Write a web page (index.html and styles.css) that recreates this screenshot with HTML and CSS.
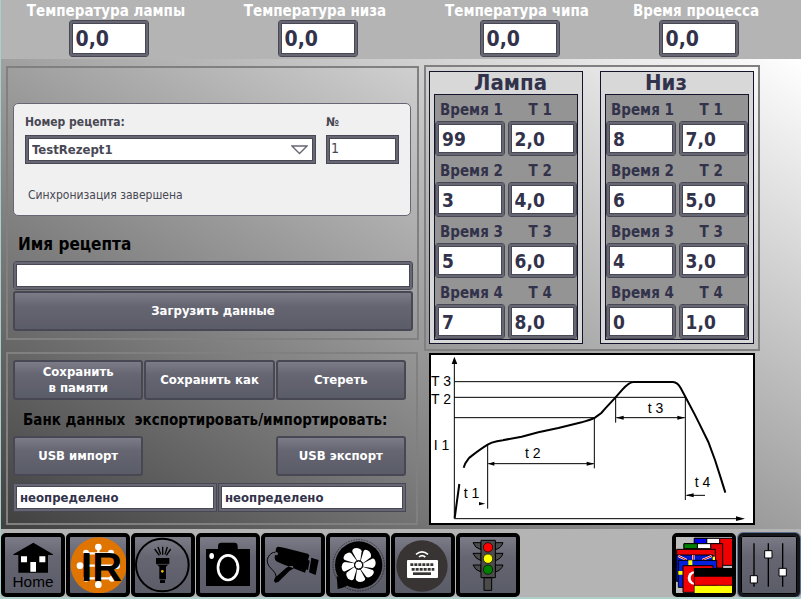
FILE: index.html
```
<!DOCTYPE html>
<html lang="ru">
<head>
<meta charset="utf-8">
<title>Рецепты</title>
<link rel="stylesheet" href="styles.css">
</head>
<body>
<header class="readings">
  <div class="reading"><label for="lamp">Температура лампы</label><input class="field" id="lamp" value="0,0"></div>
  <div class="reading"><label for="bottom">Температура низа</label><input class="field" id="bottom" value="0,0"></div>
  <div class="reading"><label for="chip">Температура чипа</label><input class="field" id="chip" value="0,0"></div>
  <div class="reading"><label for="process">Время процесса</label><input class="field" id="process" value="0,0"></div>
</header>
<main class="work">
  <div class="column">
    <section class="panel recipe">
      <div class="card">
        <div class="pick">
          <label for="recipe">Номер рецепта:</label>
          <div class="select-wrap">
            <select class="field square" id="recipe"><option>TestRezept1</option></select>
            <svg class="arrow" viewBox="0 0 17 10" aria-hidden="true"><path d="M1 1H16L8.500 8.500Z" fill="#fff" stroke="#676774" stroke-width="1.300"/></svg>
          </div>
        </div>
        <div class="pick">
          <label for="number">№</label>
          <input class="field square number" id="number" value="1">
        </div>
        <p class="status">Синхронизация завершена</p>
      </div>
      <label class="name-label" for="name">Имя рецепта</label>
      <input class="field name" id="name">
      <button class="action" type="button">Загрузить данные</button>
    </section>
    <section class="panel storage">
      <div class="row three">
        <button class="action" type="button">Сохранить<br>в памяти</button>
        <button class="action" type="button">Сохранить как</button>
        <button class="action" type="button">Стереть</button>
      </div>
      <h2 class="bank">Банк данных&nbsp; экспортировать/импортировать:</h2>
      <div class="row three">
        <button class="action" type="button">USB импорт</button>
        <button class="action last" type="button">USB экспорт</button>
      </div>
      <div class="row states">
        <input class="field square" aria-label="Состояние импорта" value="неопределено">
        <input class="field square" aria-label="Состояние экспорта" value="неопределено">
      </div>
    </section>
  </div>
  <div class="column">
    <section class="panel profiles">
      <div class="profile">
        <h2>Лампа</h2>
        <div class="steps">
          <div class="step"><label for="a1">Время 1</label><input class="field" id="a1" value="99"></div>
          <div class="step temp"><label for="b1">T 1</label><input class="field" id="b1" value="2,0"></div>
          <div class="step"><label for="a2">Время 2</label><input class="field" id="a2" value="3"></div>
          <div class="step temp"><label for="b2">T 2</label><input class="field" id="b2" value="4,0"></div>
          <div class="step"><label for="a3">Время 3</label><input class="field" id="a3" value="5"></div>
          <div class="step temp"><label for="b3">T 3</label><input class="field" id="b3" value="6,0"></div>
          <div class="step"><label for="a4">Время 4</label><input class="field" id="a4" value="7"></div>
          <div class="step temp"><label for="b4">T 4</label><input class="field" id="b4" value="8,0"></div>
        </div>
      </div>
      <div class="profile">
        <h2>Низ</h2>
        <div class="steps">
          <div class="step"><label for="c1">Время 1</label><input class="field" id="c1" value="8"></div>
          <div class="step temp"><label for="d1">T 1</label><input class="field" id="d1" value="7,0"></div>
          <div class="step"><label for="c2">Время 2</label><input class="field" id="c2" value="6"></div>
          <div class="step temp"><label for="d2">T 2</label><input class="field" id="d2" value="5,0"></div>
          <div class="step"><label for="c3">Время 3</label><input class="field" id="c3" value="4"></div>
          <div class="step temp"><label for="d3">T 3</label><input class="field" id="d3" value="3,0"></div>
          <div class="step"><label for="c4">Время 4</label><input class="field" id="c4" value="0"></div>
          <div class="step temp"><label for="d4">T 4</label><input class="field" id="d4" value="1,0"></div>
        </div>
      </div>
    </section>
    <svg class="chart" viewBox="18 15 966 504" role="img">
      <g fill="none" stroke="#000" stroke-width="3">
        <path d="M88 30V506H950M88 95H622M88 142H781M88 203H508M188 284V476M508 203V355M572 142V218M781 142V450M190 341H506M574 203H779M785 436H840"/>
        <path stroke-width="6" d="M89 504L103 402M116 353C120 338 126 332 134 322C150 310 168 296 188 284C196 279 205 276 216 274L290 260L340 247L400 234L470 217C490 211 502 208 510 203L529 189L541 175L571 143L592 119C602 108 612 97 624 96H744C756 97 762 105 767 114L783 144L809 193L824 223L850 276L870 330L886 380L901 428"/>
      </g>
      <path d="M88 20L80 42H97ZM960 506L933 499V513ZM189 341L208 335V347ZM508 341L485 335V347ZM573 203L596 197V209ZM780 203L757 197V209ZM782 436L806 430V442ZM181 461L162 456V466Z"/>
      <g class="marks">
        <text x="18" y="107">T 3</text>
        <text x="18" y="161">T 2</text>
        <text x="26" y="300">I 1</text>
        <text x="116" y="444">t 1</text><text x="300" y="323">t 2</text>
        <text x="668" y="189">t 3</text><text x="809" y="410">t 4</text>
      </g>
    </svg>
  </div>
</main>
<nav class="toolbar">
  <button class="tool" type="button" aria-label="Home"><svg viewBox="15 27 168 168">
    <path d="M40 79L100 44L159 79V81H144V134H55V81H40Z"/><path fill="#fff" d="M63 85H81V103H63ZM118 85H136V103H118ZM91 102H108V131H91Z"/>
    <text x="99" y="176" class="home">Home</text></svg></button>
  <button class="tool" type="button" aria-label="IR"><svg viewBox="210 27 168 168">
    <circle cx="296" cy="112" r="84" fill="#df7500"/>
    <g fill="#fff"><circle cx="295" cy="57" r="10"/><circle cx="258" cy="74" r="9"/><circle cx="333" cy="74" r="9"/><circle cx="240" cy="113" r="10"/><circle cx="350" cy="113" r="10"/><circle cx="258" cy="152" r="9"/><circle cx="336" cy="152" r="9"/><circle cx="295" cy="170" r="10"/></g>
    <path d="M295 58V170M260 76H330M242 113H350M260 151H334" stroke="#fff" stroke-width="7"/>
    <text x="304" y="158" class="ir">IR</text></svg></button>
  <button class="tool" type="button" aria-label="Фонарь"><svg viewBox="405 27 168 168">
    <circle cx="487" cy="111" r="79" fill="none" stroke="#000" stroke-width="6"/>
    <path d="M464 63L478 82M474 57L482 79M488 56V80M502 57L495 79M512 63L499 82" stroke="#000" stroke-width="4"/>
    <path d="M468 90H508V107L498 116V154H495V165H480V154H478V116L468 107Z"/><path d="M469 109H507M479 155H496" stroke="#666673" stroke-width="2"/>
    <circle cx="487" cy="130" r="4" fill="#eebd00"/></svg></button>
  <button class="tool" type="button" aria-label="Камера"><svg viewBox="15 27 168 168">
    <path d="M33 63H69V54Q69 44 79 44H118Q128 44 128 54V63H165V174H33Z"/>
    <ellipse cx="99" cy="119" rx="30" ry="37" fill="none" stroke="#fff" stroke-width="8"/><ellipse cx="50" cy="84" rx="7" ry="9" fill="#fff"/></svg></button>
  <button class="tool" type="button" aria-label="Наблюдение"><svg viewBox="210 27 168 168">
    <path d="M250 56Q245 55 243 62L239 88Q239 98 247 101L262 108L330 134L334 124L339 127L344 98L339 96L343 82L338 77L267 59ZM349 89L371 96L362 141L342 133ZM273 120L284 114H294L295 122L284 128L250 162L240 164L237 157L240 149Z"/>
    <circle cx="244" cy="77" r="5" fill="#656570"/>
    <path d="M240 73C229 72 216 86 217 100C218 117 235 125 241 137Q248 149 239 160" fill="none" stroke="#000" stroke-width="3"/></svg></button>
  <button class="tool" type="button" aria-label="Вентилятор"><svg viewBox="405 27 168 168">
    <circle cx="491" cy="111" r="71"/><circle cx="491" cy="112" r="77" fill="none" stroke="#000" stroke-width="3" stroke-dasharray="5 3" opacity=".5"/><path d="M425 143L428 183Q449 179 459 170Z"/>
    <g fill="#fff">
      <path d="M486 97L472 71Q470 61 486 60Q499 62 500 70L496 97Z"/>
      <path transform="rotate(45 491 111)" d="M486 97L472 71Q470 61 486 60Q499 62 500 70L496 97Z"/>
      <path transform="rotate(90 491 111)" d="M486 97L472 71Q470 61 486 60Q499 62 500 70L496 97Z"/>
      <path transform="rotate(135 491 111)" d="M486 97L472 71Q470 61 486 60Q499 62 500 70L496 97Z"/>
      <path transform="rotate(180 491 111)" d="M486 97L472 71Q470 61 486 60Q499 62 500 70L496 97Z"/>
      <path transform="rotate(225 491 111)" d="M486 97L472 71Q470 61 486 60Q499 62 500 70L496 97Z"/>
      <path transform="rotate(270 491 111)" d="M486 97L472 71Q470 61 486 60Q499 62 500 70L496 97Z"/>
      <path transform="rotate(315 491 111)" d="M486 97L472 71Q470 61 486 60Q499 62 500 70L496 97Z"/>
    </g><circle cx="491" cy="111" r="12" fill="#fff" stroke="#000" stroke-width="3"/></svg></button>
  <button class="tool" type="button" aria-label="Клавиатура"><svg viewBox="30 27 168 168">
    <circle cx="111" cy="114" r="77" fill="#393434"/><rect x="66" y="96" width="93" height="54" rx="3" fill="#fff"/>
    <path d="M76 110H148M80 124H148" stroke="#393434" stroke-width="8" stroke-dasharray="9 3"/><path d="M84 137H138" stroke="#393434" stroke-width="8"/>
    <path d="M93 79Q111 64 129 79M102 87Q111 79 121 87" fill="none" stroke="#fff" stroke-width="5"/></svg></button>
  <button class="tool" type="button" aria-label="Светофор"><svg viewBox="225 27 168 168">
    <g fill="#4b4b4b" stroke="#000" stroke-width="3"><path d="M288 44H264Q270 60 288 65ZM288 76H264Q270 92 288 98ZM288 111H264Q270 127 288 132ZM331 44H354Q349 60 331 65ZM331 76H354Q349 92 331 98ZM331 111H354Q349 127 331 132Z"/><path d="M297 149H320V187H297ZM288 37H331V149H288Z"/></g>
    <circle cx="309" cy="58" r="14" fill="red" stroke="#000" stroke-width="2"/><circle cx="309" cy="92" r="14" fill="#ff0" stroke="#000" stroke-width="2"/><circle cx="309" cy="125" r="14" fill="#008000" stroke="#000" stroke-width="2"/></svg></button>
  <button class="tool push" type="button" aria-label="Язык"><svg viewBox="33 27 168 168">
    <path fill="#bebebe" d="M30 24H204V198H30Z"/>
    <g stroke="#000" stroke-width="3"><path fill="#f00000" d="M88 31H210V112H88Z"/><path fill="#fff" d="M125 31H164V47H125Z"/><path fill="#0000f0" d="M88 31H125V47H88Z"/>
    <path fill="#e00000" d="M57 47H173V120H57Z"/><path fill="#fff" d="M97 47H137V62H97Z"/><path fill="#008000" d="M57 47H97V62H57Z"/>
    <path fill="#f00000" d="M35 64H151V120H35Z"/><path fill="#0016c8" d="M34 81H144V160H34Z"/></g>
    <path stroke="#fff" stroke-width="7" d="M40 84L65 96M140 84L112 96M85 81V96"/><path stroke="#e00000" stroke-width="3" d="M40 84L65 96M140 84L112 96M85 81V96"/>
    <path fill="#0020dc" stroke="#000" stroke-width="3" d="M40 97H155V178H40Z"/><path fill="#ff0" d="M70 97H82V112H70ZM40 129H54V140H40ZM143 86H150V96H143Z"/>
    <path fill="#f00000" stroke="#000" stroke-width="3" d="M54 113H144V193H54Z"/><circle cx="88" cy="150" r="20" fill="#fff"/><circle cx="93" cy="150" r="16" fill="#f00000"/>
    <path d="M87 120H204V147H87Z"/><path fill="#f00000" d="M87 146H201V173H87Z"/><path fill="#ff0" d="M87 173H201V198H87Z"/><path d="M88 120V196M87 172H204" stroke="#000" stroke-width="2"/></svg></button>
  <button class="tool current" type="button" aria-label="Настройки"><svg viewBox="231 27 168 168">
    <path d="M270 46V176M313 46V176M356 46V176" stroke="#000" stroke-width="4"/>
    <path fill="#fff" stroke="#000" stroke-width="3" d="M259 143H280V165H259ZM302 68H324V90H302ZM345 121H367V144H345Z"/></svg></button>
</nav>
</body>
</html>
```

FILE: styles.css
```
* { box-sizing: border-box; }

body {
  margin: 0;
  border-left: 1px solid #a9cfca;
  background: #b0cfca;
  color: #32324b;
  font-family: "DejaVu Sans Condensed", "DejaVu Sans", sans-serif;
  font-weight: bold;
  font-size: 13px;
}

input, select, button { font: inherit; color: inherit; margin: 0; }
h2, p { margin: 0; }
svg { display: block; }

.field {
  display: block;
  width: 100%;
  height: 29px;
  padding: 0 6px;
  border: 1px solid #484854;
  border-radius: 3px;
  background: #fff;
  box-shadow: inset 0 0 0 2px #676774, inset 0 0 0 3px #484854;
}
.square { border-radius: 0; }

.readings {
  display: grid;
  grid-template-columns: 210fr 208fr 196fr 162fr 24fr;
  height: 59px;
  background: #b4b4b4;
}
.reading { display: flex; flex-direction: column; align-items: center; }
.reading label { color: #fff; font-size: 15px; line-height: 20px; padding-top: 1px; height: 20px; white-space: nowrap; }
.reading .field { width: 80px; height: 37px; margin-left: 5px; font-size: 21px; }

.work {
  display: grid;
  grid-template-columns: 413fr 336fr 36fr;
  gap: 5px;
  padding: 6px 0 4px 5px;
  background: linear-gradient(to top right, #404040, #fff);
}
.column { display: flex; flex-direction: column; min-width: 0; }
.panel { border: 2px solid #808080; }

.recipe { margin-top: 1px; padding: 35px 4px 7px 5px; }
.card {
  display: grid;
  grid-template-columns: 291fr 73fr;
  column-gap: 10px;
  height: 113px;
  margin-right: 2px;
  padding: 8px 11px;
  border: 1px solid #676774;
  border-radius: 5px;
  background: #f0f0f0;
  color: #484854;
}
.pick label { display: block; padding-bottom: 3px; font-size: 12px; line-height: 20px; }
.select-wrap { position: relative; }
.select-wrap select { appearance: none; }
.arrow { position: absolute; right: 8px; top: 10px; width: 17px; height: 10px; pointer-events: none; }
.number { padding: 0 4px 4px; font-weight: normal; font-size: 14px; }
.status { padding: 18px 3px 0; font-weight: normal; font-size: 12px; line-height: 20px; }
.name-label { display: block; padding: 17px 5px 6px; color: #000; font-size: 17px; line-height: 22px; }
.name { margin-bottom: 1px; }

.action {
  display: block;
  width: 100%;
  height: 40px;
  padding: 0;
  border: 2px solid #484854;
  border-radius: 3px;
  background: linear-gradient(#7c7c88, #666672 35%, #5a5c68);
  color: #fff;
  line-height: 16px;
}

.storage { margin: 12px 1px 0 0; padding: 6px 10px 11px 5px; }
.row { display: grid; column-gap: 1px; }
.three { grid-template-columns: repeat(3, 1fr); }
.last { grid-column: 3; }
.states { grid-template-columns: 204fr 188fr; padding-top: 7px; }
.bank { padding: 4px 0 0 10px; color: #000; font-size: 15px; line-height: 32px; white-space: nowrap; }

.profiles { display: flex; justify-content: space-between; padding: 4px 4px 5px 3px; }
.profile { width: 154px; padding: 0 4px 3px; border: 1px solid #14142d; background: #d8d8d8; }
.profile h2 { padding-left: 40px; font-size: 22px; line-height: 22px; }
.steps {
  display: grid;
  grid-template-columns: 1fr 1fr;
  column-gap: 3px;
  border: 1px solid #14142d;
  background: #949494;
}
.step label { display: block; height: 26px; padding: 3px 0 0 5px; font-size: 15px; line-height: 24px; white-space: nowrap; }
.temp label { padding: 3px 4px 0 0; text-align: center; }
.step .field { height: 35px; font-size: 19px; }

.chart { margin: 2px 5px 0; border: 2px solid #000; background: #fff; }
.marks { font-family: "Liberation Sans", sans-serif; font-weight: normal; font-size: 42px; }

.toolbar { display: flex; gap: 1px; padding: 4px 0 0; background: linear-gradient(#b4b4b4, #b4b4b4) top / 100% 68px no-repeat; }
.tool {
  flex: none;
  width: 64px;
  height: 64px;
  padding: 0;
  border: 4px solid #000;
  border-radius: 5px;
  background: linear-gradient(#7c7c88, #666672 35%, #5a5c68);
}
.push { margin-left: auto; }
.current { border-width: 3px; border-color: #14161c; box-shadow: inset 0 0 0 1px #000, 0 0 0 1px #5a7090; width: 62px; margin: 0 1px; }
.home { font: 46px "Liberation Sans", sans-serif; text-anchor: middle; }
.ir { font: bold 124px "Liberation Sans", sans-serif; text-anchor: middle; }
```
